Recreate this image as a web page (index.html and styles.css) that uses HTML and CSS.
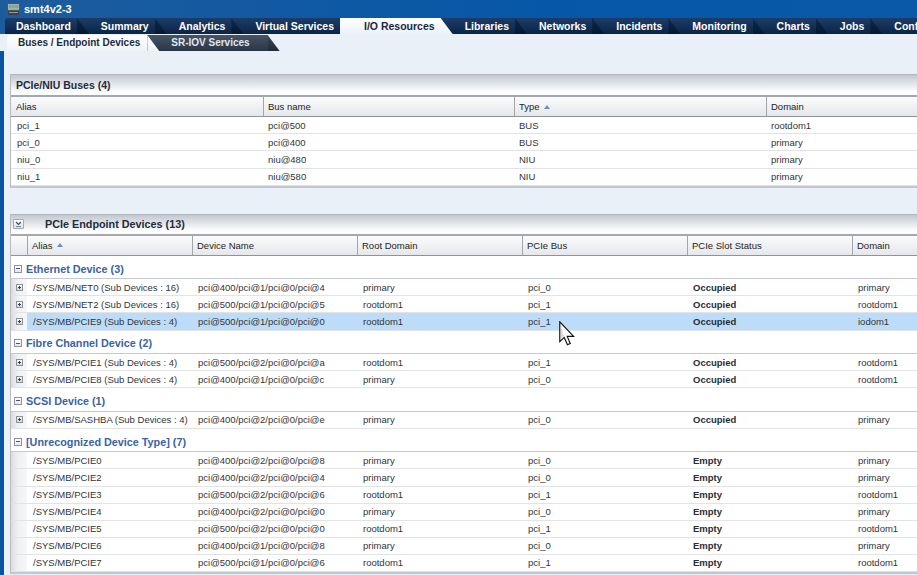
FILE: index.html
```html
<!DOCTYPE html>
<html>
<head>
<meta charset="utf-8">
<link rel="stylesheet" href="styles.css">
</head>
<body>
<div class="app">
  <div class="top">
    <div class="titlebar">
      <svg class="logo" width="13" height="12" viewBox="0 0 13 12">
        <rect x="0.5" y="0.5" width="12" height="7" fill="#a3abb4" stroke="#4d5560"/>
        <rect x="2" y="2" width="2" height="3" fill="#57c45a"/>
        <rect x="5" y="2" width="2" height="3" fill="#57c45a"/>
        <rect x="8" y="2" width="3" height="3" fill="#57c45a"/>
        <rect x="1" y="8" width="11" height="4" fill="#39434f"/>
        <rect x="2" y="9" width="9" height="1" fill="#8b96a3"/>
      </svg>
      <span>smt4v2-3</span>
    </div>
    <nav class="tabs">
      <div class="tab">Dashboard</div>
      <div class="tab">Summary</div>
      <div class="tab">Analytics</div>
      <div class="tab">Virtual Services</div>
      <div class="tab active">I/O Resources</div>
      <div class="tab">Libraries</div>
      <div class="tab">Networks</div>
      <div class="tab">Incidents</div>
      <div class="tab">Monitoring</div>
      <div class="tab">Charts</div>
      <div class="tab">Jobs</div>
      <div class="tab">Configuration</div>
    </nav>
  </div>
  <nav class="subtabs">
    <div class="subtab active">Buses / Endpoint Devices</div>
    <div class="subtab sriov">SR-IOV Services</div>
  </nav>
  <main class="content">
    <section class="panel">
      <div class="panel-head">PCIe/NIU Buses (4)</div>
      <div class="th g1">
        <div>Alias</div><div>Bus name</div><div>Type <i class="sort"></i></div><div>Domain</div>
      </div>
      <div class="row g1"><div>pci_1</div><div>pci@500</div><div>BUS</div><div>rootdom1</div></div>
      <div class="row g1"><div>pci_0</div><div>pci@400</div><div>BUS</div><div>primary</div></div>
      <div class="row g1"><div>niu_0</div><div>niu@480</div><div>NIU</div><div>primary</div></div>
      <div class="row g1"><div>niu_1</div><div>niu@580</div><div>NIU</div><div>primary</div></div>
      <div class="panel-foot"></div>
    </section>

    <section class="panel panel2">
      <div class="panel-head head2">
        <span class="collapse"><svg width="9" height="8" viewBox="0 0 9 8"><polyline points="2,2 4.5,4.5 7,2" fill="none" stroke="#3d4b60" stroke-width="1.2"/><line x1="2" y1="6.5" x2="7" y2="6.5" stroke="#7d8796" stroke-width="1"/></svg></span>
        <span class="head-title">PCIe Endpoint Devices (13)</span>
      </div>
      <div class="th g2">
        <div></div><div>Alias <i class="sort"></i></div><div>Device Name</div><div>Root Domain</div><div>PCIe Bus</div><div>PCIe Slot Status</div><div>Domain</div>
      </div>

      <div class="grp"><i class="minus"></i>Ethernet Device (3)</div>
      <div class="row g2"><div class="rh"><i class="plus"></i></div><div>/SYS/MB/NET0 (Sub Devices : 16)</div><div>pci@400/pci@1/pci@0/pci@4</div><div>primary</div><div>pci_0</div><div class="b">Occupied</div><div>primary</div></div>
      <div class="row g2"><div class="rh"><i class="plus"></i></div><div>/SYS/MB/NET2 (Sub Devices : 16)</div><div>pci@500/pci@1/pci@0/pci@5</div><div>rootdom1</div><div>pci_1</div><div class="b">Occupied</div><div>rootdom1</div></div>
      <div class="row g2 sel"><div class="rh"><i class="plus"></i></div><div>/SYS/MB/PCIE9 (Sub Devices : 4)</div><div>pci@500/pci@1/pci@0/pci@0</div><div>rootdom1</div><div>pci_1</div><div class="b">Occupied</div><div>iodom1</div></div>

      <div class="grp"><i class="minus"></i>Fibre Channel Device (2)</div>
      <div class="row g2"><div class="rh"><i class="plus"></i></div><div>/SYS/MB/PCIE1 (Sub Devices : 4)</div><div>pci@500/pci@2/pci@0/pci@a</div><div>rootdom1</div><div>pci_1</div><div class="b">Occupied</div><div>rootdom1</div></div>
      <div class="row g2"><div class="rh"><i class="plus"></i></div><div>/SYS/MB/PCIE8 (Sub Devices : 4)</div><div>pci@400/pci@1/pci@0/pci@c</div><div>primary</div><div>pci_0</div><div class="b">Occupied</div><div>rootdom1</div></div>

      <div class="grp"><i class="minus"></i>SCSI Device (1)</div>
      <div class="row g2"><div class="rh"><i class="plus"></i></div><div>/SYS/MB/SASHBA (Sub Devices : 4)</div><div>pci@400/pci@2/pci@0/pci@e</div><div>primary</div><div>pci_0</div><div class="b">Occupied</div><div>primary</div></div>

      <div class="grp"><i class="minus"></i>[Unrecognized Device Type] (7)</div>
      <div class="row g2"><div class="rh"></div><div>/SYS/MB/PCIE0</div><div>pci@400/pci@2/pci@0/pci@8</div><div>primary</div><div>pci_0</div><div class="b">Empty</div><div>primary</div></div>
      <div class="row g2"><div class="rh"></div><div>/SYS/MB/PCIE2</div><div>pci@400/pci@2/pci@0/pci@4</div><div>primary</div><div>pci_0</div><div class="b">Empty</div><div>primary</div></div>
      <div class="row g2"><div class="rh"></div><div>/SYS/MB/PCIE3</div><div>pci@500/pci@2/pci@0/pci@6</div><div>rootdom1</div><div>pci_1</div><div class="b">Empty</div><div>rootdom1</div></div>
      <div class="row g2"><div class="rh"></div><div>/SYS/MB/PCIE4</div><div>pci@400/pci@2/pci@0/pci@0</div><div>primary</div><div>pci_0</div><div class="b">Empty</div><div>primary</div></div>
      <div class="row g2"><div class="rh"></div><div>/SYS/MB/PCIE5</div><div>pci@500/pci@2/pci@0/pci@0</div><div>rootdom1</div><div>pci_1</div><div class="b">Empty</div><div>rootdom1</div></div>
      <div class="row g2"><div class="rh"></div><div>/SYS/MB/PCIE6</div><div>pci@400/pci@1/pci@0/pci@8</div><div>primary</div><div>pci_0</div><div class="b">Empty</div><div>primary</div></div>
      <div class="row g2"><div class="rh"></div><div>/SYS/MB/PCIE7</div><div>pci@500/pci@1/pci@0/pci@6</div><div>rootdom1</div><div>pci_1</div><div class="b">Empty</div><div>rootdom1</div></div>
      <div class="panel-foot"></div>
    </section>
  </main>
  <svg class="cursor" width="16" height="25" viewBox="0 0 12.5 19.5">
    <path d="M0.6 0.6 L0.6 16.2 L4.1 12.8 L6.6 18.6 L8.8 17.6 L6.4 12 L11.4 12 Z" fill="#fff" stroke="#111" stroke-width="0.9" stroke-linejoin="miter"/>
    <path d="M1.6 3 L1.6 14 L4 11.5 L3 10 Z" fill="#d9d9d9"/>
  </svg>
</div>
</body>
</html>
```
FILE: styles.css
```css
html, body {
  margin: 0;
  padding: 0;
  width: 917px;
  height: 575px;
  overflow: hidden;
}
body {
  font-family: "Liberation Sans", Arial, sans-serif;
  font-size: 9.5px;
  color: #30343a;
  background: #e9f0f8;
}
.app {
  position: relative;
  width: 917px;
  height: 575px;
  overflow: hidden;
}
.top {
  height: 34px;
  background: linear-gradient(to right, #1d5c9c, #0657a8 60%, #0a59a9);
}
.titlebar {
  height: 18px;
  display: flex;
  align-items: center;
  gap: 4px;
  padding-left: 7px;
  color: #fff;
  font-weight: bold;
  font-size: 11px;
}
.logo { display: block; }
.tabs {
  display: flex;
  height: 16px;
  padding-left: 5px;
  white-space: nowrap;
}
.tab {
  position: relative;
  height: 16px;
  line-height: 16px;
  padding: 0 6px 0 24px;
  background: linear-gradient(#1d3d68, #0b2446);
  color: #fff;
  font-weight: bold;
  font-size: 10.5px;
  flex: none;
}
.tab:first-child {
  padding-left: 11px;
  border-top-left-radius: 3px;
}
.tab::after {
  content: "";
  position: absolute;
  top: 0;
  right: -12px;
  width: 12px;
  height: 100%;
  background: linear-gradient(#0d2a4e, #051830);
  clip-path: polygon(0 0, 100% 100%, 0 100%);
  z-index: 2;
}
.tab.active {
  background: linear-gradient(#ffffff, #ebf1f9);
  color: #1a2940;
  z-index: 3;
}
.tab.active::after {
  background: linear-gradient(#ffffff, #ebf1f9);
}
.subtabs {
  height: 17px;
  display: flex;
  padding-left: 7px;
  background: #e9f0f8;
  white-space: nowrap;
}
.subtab {
  position: relative;
  height: 16px;
  margin-top: 1px;
  line-height: 16px;
  padding: 0 7px 0 24px;
  background: linear-gradient(#465465, #2b3645);
  color: #e1e6ec;
  font-weight: bold;
  font-size: 10px;
  flex: none;
}
.subtab::after {
  content: "";
  position: absolute;
  top: 0;
  right: -12px;
  width: 12px;
  height: 100%;
  background: linear-gradient(#3a4757, #222c38);
  clip-path: polygon(0 0, 100% 100%, 0 100%);
  z-index: 2;
}
.subtab.active {
  padding-left: 11px;
  border-top-left-radius: 3px;
  background: linear-gradient(#ffffff, #eef3f9);
  color: #1d2b42;
  z-index: 3;
}
.subtab.active::after {
  background: linear-gradient(#ffffff, #eef3f9);
}
.subtab.sriov { padding-right: 18px; }

.content {
  border-left: 4px solid #0a55a2;
  padding: 23px 0 0 6px;
  height: 600px;
}
.panel {
  width: 960px;
  background: #fff;
  border-left: 1px solid #b7bcc3;
}
.panel2 { margin-top: 26px; }
.panel-head {
  height: 21px;
  box-sizing: border-box;
  border-top: 1px solid #b0b6be;
  background: linear-gradient(#c3c8cf, #dfe3e7 40%, #fafbfc 80%, #ffffff);
  font-weight: bold;
  font-size: 10.5px;
  color: #1e2c3c;
  padding-left: 5px;
  line-height: 20px;
}
.head2 {
  height: 20px;
  display: flex;
  align-items: center;
  padding-left: 2px;
}
.collapse {
  width: 11px;
  height: 10px;
  box-sizing: border-box;
  border: 1px solid #a3aab4;
  border-radius: 1px;
  background: linear-gradient(#ffffff, #dce1e7);
  display: flex;
  align-items: center;
  justify-content: center;
}
.collapse svg { display: block; }
.head-title { margin-left: 21px; font-size: 10.8px; }

.th, .row { display: grid; }
.g1 { grid-template-columns: 252px 251px 252px 1fr; }
.g2 { grid-template-columns: 16px 165px 165px 165px 165px 165px 1fr; }
.th {
  height: 22px;
  box-sizing: border-box;
  border-top: 2px solid #a3a8ae;
  border-bottom: 1.5px solid #8d9399;
  background: linear-gradient(#fbfbfc, #e5e7eb);
  color: #1c1e21;
}
.th > div {
  display: flex;
  align-items: center;
  padding-left: 4px;
  border-left: 1px solid #a2a6ab;
  white-space: nowrap;
}
.th > div:first-child { border-left: none; padding-left: 5px; }
.g2.th > div:first-child { padding-left: 0; }
.sort {
  display: inline-block;
  width: 0;
  height: 0;
  margin-left: 4px;
  border-left: 3px solid transparent;
  border-right: 3px solid transparent;
  border-bottom: 4px solid #6e8ec3;
}
.row {
  height: 17.1px;
  box-sizing: border-box;
  border-bottom: 1px solid #e1e3e6;
  align-items: center;
}
.g1.row { height: 17.2px; }
.row > div {
  padding-left: 6px;
  white-space: nowrap;
  overflow: hidden;
}
.g1.row > div { padding-left: 5px; }
.g1.row > div:first-child { padding-left: 6px; }
.row > .rh {
  padding-left: 0;
  align-self: stretch;
  background: linear-gradient(to right, #d9dbde, #eef0f2 40%, #f6f7f8);
  display: flex;
  align-items: center;
  justify-content: center;
}
.row.sel { background: #bcdcf9; }
.b { font-weight: bold; color: #2a2d33; }
.plus {
  position: relative;
  width: 7px;
  height: 7px;
  box-sizing: border-box;
  border: 1px solid #8e939a;
  background: linear-gradient(#fbfbfb, #d6d8db);
}
.plus::before, .plus::after, .minus::before {
  content: "";
  position: absolute;
  background: #3c4048;
}
.plus::before { left: 1px; top: 2px; width: 3px; height: 1px; }
.plus::after { left: 2px; top: 1px; width: 1px; height: 3px; }
.grp {
  height: 23.5px;
  box-sizing: border-box;
  border-bottom: 1px solid #c5c8d6;
  display: flex;
  align-items: center;
  gap: 4px;
  padding: 3px 0 0 3px;
  font-weight: bold;
  font-size: 10.8px;
  color: #3a62a5;
  white-space: nowrap;
}
.minus {
  position: relative;
  width: 8px;
  height: 8px;
  box-sizing: border-box;
  border: 1px solid #8b94a4;
  background: linear-gradient(#ffffff, #e4e7ec);
}
.minus::before { left: 1px; top: 2.5px; width: 4px; height: 1px; background: #4a5670; }
.panel-foot { height: 2px; background: #c3c6ca; }
.cursor {
  position: absolute;
  left: 559px;
  top: 321px;
}
```
